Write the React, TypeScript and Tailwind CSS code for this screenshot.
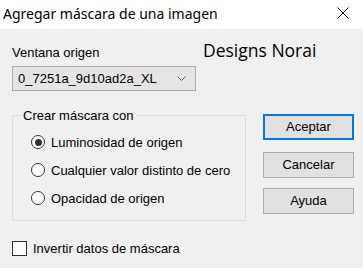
import React from "react";

const ui = { fontFamily: '"Liberation Sans", Arial, sans-serif' };

function Radio({ checked, label }: { checked?: boolean; label: string }) {
  return (
    <div className="flex items-center h-[28px]">
      <div className="w-[14px] h-[14px] rounded-full border border-[#333333] bg-white flex items-center justify-center">
        {checked && <div className="w-[7px] h-[7px] rounded-full bg-[#333333]" />}
      </div>
      <span className="ml-[6px] text-[13px] text-black leading-[15px]">{label}</span>
    </div>
  );
}

function Btn({ label, primary }: { label: string; primary?: boolean }) {
  return (
    <div
      className={
        "w-[91px] h-[26px] flex items-center justify-center text-[13px] text-black bg-[#e1e1e1] " +
        (primary ? "border-2 border-[#0078d7]" : "border border-[#adadad]")
      }
    >
      {label}
    </div>
  );
}

export default function App() {
  return (
    <div className="w-[363px] h-[268px] bg-[#f0f0f0] overflow-hidden" style={ui}>
      <div className="h-[29px] bg-white flex items-center justify-between pl-[3px] pr-[14px]">
        <span className="text-[14px] text-black leading-none pb-[2px]" style={{ fontFamily: '"Noto Sans", sans-serif' }}>
          Agregar máscara de una imagen
        </span>
        <svg width="12" height="12" viewBox="0 0 12 12" className="mb-[3px]">
          <path d="M0.5 0.5 L11.5 11.5 M11.5 0.5 L0.5 11.5" stroke="#000" strokeWidth="1" />
        </svg>
      </div>
      <div className="pl-[12px]">
        <div className="flex">
          <div className="w-[184px]">
            <div className="mt-[16px] text-[13px] leading-[15px] text-black">Ventana origen</div>
            <div className="mt-[6px] h-[25px] bg-[#e5e5e5] border border-[#acacac] flex items-center justify-between pl-[5px] pr-[9px]">
              <span className="text-[13px] text-black">0_7251a_9d10ad2a_XL</span>
              <svg width="9" height="6" viewBox="0 0 9 6">
                <path d="M0.5 0.5 L4.5 4.5 L8.5 0.5" stroke="#606060" fill="none" strokeWidth="1" />
              </svg>
            </div>
          </div>
          <div
            className="ml-[7px] mt-[11px] text-[17.5px] leading-[20px] text-black"
            style={{ fontFamily: '"Open Sans", sans-serif' }}
          >
            Designs Norai
          </div>
        </div>
        <div className="flex mt-[24px]">
          <div className="relative w-[234px] h-[106px] border border-[#dcdcdc]">
            <span className="absolute left-[8px] top-[-8px] px-[2px] bg-[#f0f0f0] text-[13px] leading-[15px] text-black">
              Crear máscara con
            </span>
            <div className="pl-[18px] pt-[12px]">
              <Radio checked label="Luminosidad de origen" />
              <Radio label="Cualquier valor distinto de cero" />
              <Radio label="Opacidad de origen" />
            </div>
          </div>
          <div className="ml-[17px] flex flex-col gap-[12px] mt-[-1px]">
            <Btn primary label="Aceptar" />
            <div className="flex flex-col gap-[10px]">
              <Btn label="Cancelar" />
              <Btn label="Ayuda" />
            </div>
          </div>
        </div>
        <div className="flex items-center mt-[20px]">
          <div className="w-[15px] h-[15px] border border-[#333333] bg-white" />
          <span className="ml-[6px] text-[13px] leading-[15px] text-black">Invertir datos de máscara</span>
        </div>
      </div>
    </div>
  );
}
